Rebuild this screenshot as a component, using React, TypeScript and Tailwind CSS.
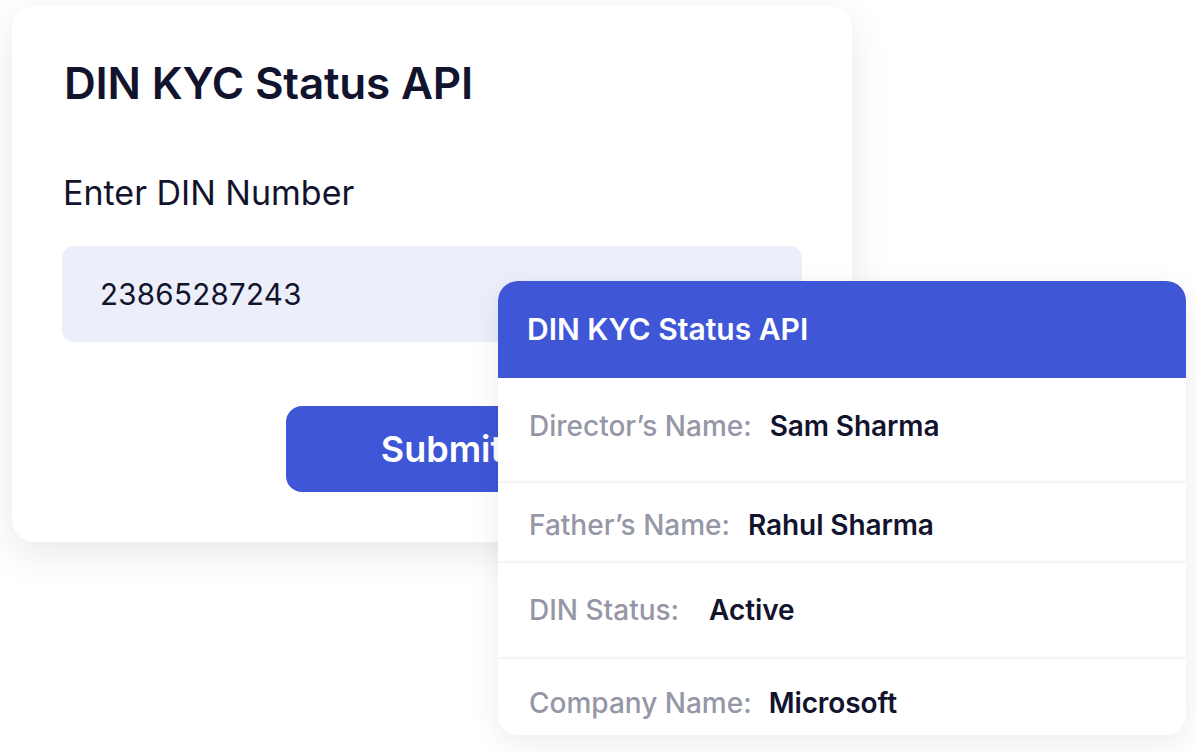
const rows = [
  { label: "Director’s Name:", value: "Sam Sharma", h: "h-[105px] pb-[8px]", gap: "gap-[18px]" },
  { label: "Father’s Name:", value: "Rahul Sharma", h: "h-[80px] pt-[6px]", gap: "gap-[18px]" },
  { label: "DIN Status:", value: "Active", h: "h-[96px]", gap: "gap-[30px]" },
  { label: "Company Name:", value: "Microsoft", h: "h-[76px] pt-[12px]", gap: "gap-[17px]" },
];

export default function App() {
  return (
    <div
      className="relative w-[1196px] h-[752px] overflow-hidden bg-white"
      style={{ fontFamily: "Inter, 'Noto Sans', sans-serif" }}
    >
      {/* input card */}
      <div className="ml-[12px] mt-[6px] w-[840px] h-[536px] rounded-[22px] bg-white shadow-[0_12px_40px_rgba(0,0,0,0.09)] pl-[50px] pr-[50px] pt-[53px]">
        <h1 className="pl-[2px] text-[44px] leading-[48px] font-semibold text-[#12132d] tracking-[-0.2px]">
          DIN KYC Status API
        </h1>
        <p className="mt-[66px] pl-[1px] text-[34px] leading-[40px] text-[#12132d]">Enter DIN Number</p>
        <div className="mt-[33px] h-[96px] rounded-[12px] bg-[#eceef9] flex items-center pl-[38px]">
          <span className="text-[29.5px] text-[#12132d] tracking-[0.3px]">23865287243</span>
        </div>
        <div className="mt-[64px] flex">
          <button className="ml-[224px] w-[312px] h-[86px] rounded-[16px] bg-[#3f57d7] text-white text-[36px] font-semibold">
            Submit
          </button>
        </div>
      </div>

      {/* result card */}
      <div className="absolute left-[498px] top-[281px] w-[688px] rounded-[20px] bg-white shadow-[0_8px_30px_rgba(0,0,0,0.08)] overflow-hidden">
        <div className="h-[97px] bg-[#3f57d7] flex items-center pl-[29px]">
          <span className="text-[30px] font-semibold text-white">DIN KYC Status API</span>
        </div>
        {rows.map((r, i) => (
          <div
            key={r.label}
            className={`${r.h} flex items-center ${r.gap} pl-[31px] ${i < rows.length - 1 ? "border-b-2 border-[#f3f4f7]" : ""}`}
          >
            <span className="text-[28px] font-medium text-[#9597a7]">{r.label}</span>
            <span className="text-[28px] font-semibold text-[#12132d] tracking-[-0.1px]">{r.value}</span>
          </div>
        ))}
      </div>
    </div>
  );
}
